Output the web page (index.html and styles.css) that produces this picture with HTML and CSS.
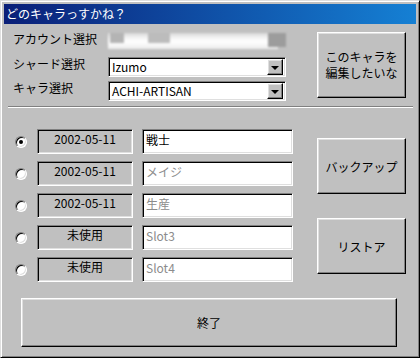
FILE: index.html
```html
<!DOCTYPE html>
<html>
<head>
    <title>どのキャラっすかね？</title>
    <link rel="stylesheet" href="styles.css">
</head>
<body>
    <div class="window">
        <div class="titlebar">どのキャラっすかね？</div>
        <div class="content">
            <div class="top">
                <div class="selects">
                    <div class="sel-row acc-row">
                        <span class="label">アカウント選択</span>
                        <div class="account-blur"><i></i><i></i><i></i></div>
                    </div>
                    <div class="sel-row shard-row">
                        <span class="label">シャード選択</span>
                        <div class="combo sunken"><span>Izumo</span><span class="drop btn"><b></b></span></div>
                    </div>
                    <div class="sel-row chara-row">
                        <span class="label">キャラ選択</span>
                        <div class="combo sunken"><span>ACHI-ARTISAN</span><span class="drop btn"><b></b></span></div>
                    </div>
                </div>
                <button class="btn edit-btn"><span>このキャラを</span><span>編集したいな</span></button>
            </div>

            <div class="sep"></div>

            <div class="middle">
                <div class="slots">
                    <div class="slot">
                        <span class="radio checked"></span>
                        <div class="date sunken">2002-05-11</div>
                        <div class="name sunken">戦士</div>
                    </div>
                    <div class="slot">
                        <span class="radio"></span>
                        <div class="date sunken">2002-05-11</div>
                        <div class="name sunken muted">メイジ</div>
                    </div>
                    <div class="slot">
                        <span class="radio"></span>
                        <div class="date sunken">2002-05-11</div>
                        <div class="name sunken muted">生産</div>
                    </div>
                    <div class="slot">
                        <span class="radio"></span>
                        <div class="date sunken">未使用</div>
                        <div class="name sunken muted">Slot3</div>
                    </div>
                    <div class="slot">
                        <span class="radio"></span>
                        <div class="date sunken">未使用</div>
                        <div class="name sunken muted">Slot4</div>
                    </div>
                </div>
                <div class="side">
                    <button class="btn side-btn">バックアップ</button>
                    <button class="btn side-btn">リストア</button>
                </div>
            </div>

            <button class="btn quit-btn">終了</button>
        </div>
    </div>
</body>
</html>
```

FILE: styles.css
```css
:root {
    --face: #c0c0c0;
    --light: #dfdfdf;
    --shadow: #808080;
    --dark: #000000;
    --muted: #8c8c8c;
}

html, body {
    margin: 0;
    padding: 0;
    background: var(--face);
}

body {
    font-family: "Noto Sans CJK JP", "DejaVu Sans", sans-serif;
    font-size: 12px;
    color: #000;
}

.window {
    width: 420px;
    height: 358px;
    box-sizing: border-box;
    padding: 2px 3px 3px 3px;
    background: var(--face);
    border: 1px solid;
    border-color: var(--light) var(--dark) var(--dark) var(--light);
    box-shadow: inset 1px 1px #fff, inset -1px -1px var(--shadow);
}

.titlebar {
    height: 20px;
    margin-top: 1px;
    padding-left: 2px;
    line-height: 19px;
    font-size: 12px;
    color: #fff;
    background: linear-gradient(to right, #0a1f78, #1580d4);
}

/* classic 3d edges */
.btn {
    background: var(--face);
    border: 1px solid;
    border-color: #fff var(--dark) var(--dark) #fff;
    box-shadow: inset -1px -1px var(--shadow), inset 1px 1px var(--light);
    font-family: inherit;
    font-size: 12px;
    color: #000;
    padding: 0;
    box-sizing: border-box;
}

.sunken {
    border: 1px solid;
    border-color: var(--shadow) #fff #fff var(--shadow);
    box-shadow: inset 1px 1px var(--dark), inset -1px -1px var(--light);
    box-sizing: border-box;
}

.content {
    display: flex;
    flex-direction: column;
}

/* top area */
.top {
    display: flex;
    align-items: flex-start;
    padding: 8px 10px 0 9px;
}

.selects {
    display: flex;
    flex-direction: column;
}

.sel-row {
    display: flex;
    align-items: flex-start;
}

.label {
    width: 95px;
    line-height: 14px;
}

.acc-row {
    height: 25px;
}

.shard-row {
    height: 24px;
}

.account-blur {
    position: relative;
    width: 170px;
    height: 16px;
    margin-top: 1px;
    background: linear-gradient(to bottom, #d8d8d8 0, #f4f4f4 30%, #fff 55%, #ececec 100%);
    filter: blur(1px);
}

.account-blur i {
    position: absolute;
    top: 0;
    height: 10px;
}

.account-blur i:nth-child(1) { left: 2px; width: 14px; background: #b4b4b4; }
.account-blur i:nth-child(2) { left: 40px; width: 22px; background: #bcbcbc; }
.account-blur i:nth-child(3) { left: 160px; width: 18px; height: 14px; background: #9c9c9c; }

.combo {
    width: 178px;
    height: 20px;
    background: #fff;
    display: flex;
    align-items: center;
    justify-content: space-between;
    padding: 2px 2px 2px 3px;
    line-height: 14px;
}

.drop {
    width: 16px;
    height: 16px;
    display: flex;
    align-items: center;
    justify-content: center;
}

.drop b {
    width: 0;
    height: 0;
    border-left: 4px solid transparent;
    border-right: 4px solid transparent;
    border-top: 4px solid #000;
    margin-top: 1px;
}

.edit-btn {
    margin-left: auto;
    width: 89px;
    height: 66px;
    display: flex;
    flex-direction: column;
    align-items: center;
    justify-content: center;
}

.edit-btn span {
    line-height: 16px;
}

.sep {
    margin: 5px 3px 0 4px;
    border-top: 1px solid var(--shadow);
    border-bottom: 1px solid #fff;
}

/* slot rows */
.middle {
    display: flex;
    padding: 21px 10px 0 11px;
}

.slots {
    display: flex;
    flex-direction: column;
    gap: 7px;
}

.slot {
    display: flex;
    align-items: center;
    height: 25px;
}

.radio {
    width: 12px;
    height: 12px;
    box-sizing: border-box;
    border-radius: 50%;
    background: #fff;
    border: 1px solid;
    border-color: var(--shadow) #fff #fff var(--shadow);
    box-shadow: inset 1px 1px var(--dark), inset -1px -1px var(--light);
    display: flex;
    align-items: center;
    justify-content: center;
}

.radio.checked::after {
    content: "";
    width: 4px;
    height: 4px;
    border-radius: 50%;
    background: #000;
}

.date {
    width: 96px;
    height: 25px;
    margin-left: 10px;
    text-align: center;
    padding-top: 2px;
    line-height: 14px;
    background: var(--face);
}

.name {
    width: 151px;
    height: 25px;
    margin-left: 9px;
    background: #fff;
    padding: 2px 3px;
    line-height: 15px;
}

.name.muted {
    color: var(--muted);
}

.side {
    margin-left: auto;
    display: flex;
    flex-direction: column;
    gap: 24px;
    padding-top: 9px;
}

.side-btn {
    width: 89px;
    height: 56px;
}

.quit-btn {
    margin: 16px 0 0 17px;
    width: 376px;
    height: 49px;
}
```
